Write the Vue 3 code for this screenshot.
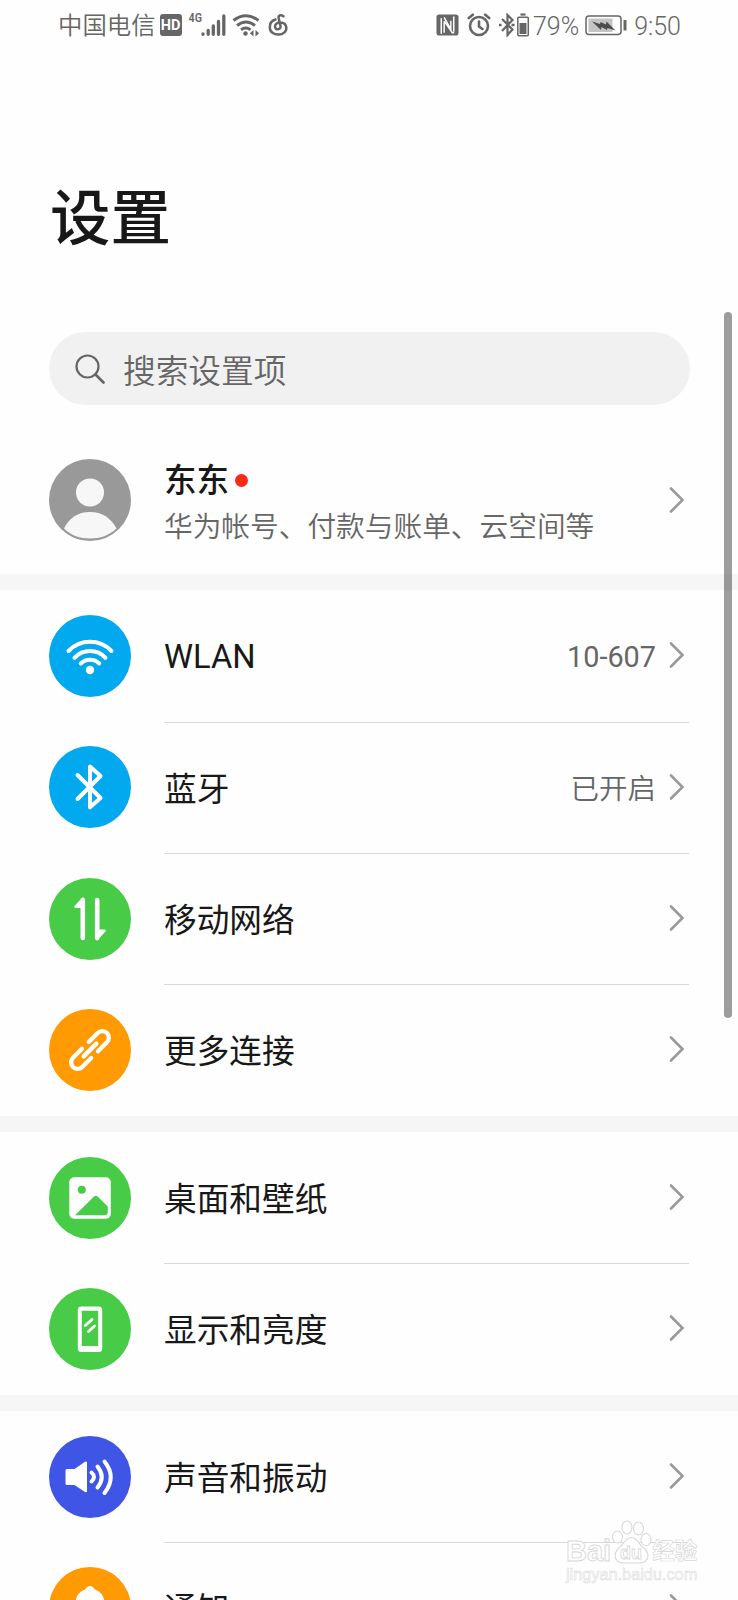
<script setup>
const groups = [
  [
    { icon: 'wifi', color: 'blue', label: 'WLAN', value: '10-607', latin: true },
    { icon: 'bluetooth', color: 'blue', label: '蓝牙', value: '已开启' },
    { icon: 'mobile', color: 'green', label: '移动网络' },
    { icon: 'link', color: 'orange', label: '更多连接' },
  ],
  [
    { icon: 'picture', color: 'green', label: '桌面和壁纸' },
    { icon: 'display', color: 'green', label: '显示和亮度' },
  ],
  [
    { icon: 'sound', color: 'indigo', label: '声音和振动' },
    { icon: 'bell', color: 'orange', label: '通知' },
  ],
]
</script>

<template>
  <div class="screen">
    <header class="status">
      <div class="status-left">
        <span class="carrier">中国电信</span>
        <span class="hd">HD</span>
        <span class="net">4G</span>
        <svg class="signal" width="25" height="24" viewBox="0 0 25 24" stroke="#666" stroke-width="3.300" stroke-linecap="round">
          <path d="M2 21.300v-.5M7.200 21.300v-4M12.300 21.300v-8.500M17.500 21.300v-13M22.800 21.300v-18.300" />
        </svg>
        <svg class="wifi" width="28" height="24" viewBox="0 0 28 24" fill="none" stroke="#666" stroke-width="2.900">
          <path d="M1.500 7.500q12.500-9.500 25 0M5 12.500q9-7 18 0M9 16.800q5-3.600 9.500 0" />
          <circle cx="13.500" cy="20.500" r="2.200" fill="#666" stroke="none" />
          <path d="M21.500 17v6.500l-3.600-3.200zM23.500 17v6.500l3.600-3.200z" fill="#666" stroke="none" />
        </svg>
        <svg class="music" width="20" height="24" viewBox="0 0 20 24" fill="none" stroke="#666" stroke-width="2.500" stroke-linecap="round">
          <path d="M15.500 3.300c-3-2.200-5.500-.8-4.800 2l1.800 8c.5 3.800-5.500 4-5.500.3 0-5.500 10.500-5.800 11.300.7.800 9.300-15.800 10-16.500.5C1.600 10.500 4 7.500 7.500 6.500" />
        </svg>
      </div>
      <div class="status-right">
        <svg width="23" height="24" viewBox="0 0 24 24">
          <rect x="0.500" y="1" width="23" height="22" rx="3" fill="#666" />
          <path d="M5.500 21V5M18.500 3V19" fill="none" stroke="#fff" stroke-width="1.600" />
          <path d="M8.500 4l7 12.500V7.500M5.500 5M8.500 8v12M8.500 8l8.500 12h2" fill="none" stroke="#fff" stroke-width="1.500" />
        </svg>
        <svg class="alarm" width="24" height="24" viewBox="0 0 24 24" fill="none" stroke="#666" stroke-width="2.600" stroke-linecap="round">
          <circle cx="12" cy="13" r="9" />
          <path d="M1.800 5l4-3.300M22.200 5l-4-3.300M12 8.500v5l3.500 2.500" />
        </svg>
        <svg class="bt" width="32" height="24" viewBox="0 0 32 24" fill="none" stroke="#666" stroke-width="2.200">
          <path d="M4 6l10.500 10.500L9.500 22V2l5 5L4 18" />
          <path d="M1 12h2.500M13.500 12h3" stroke-width="2.600" />
          <rect x="19.800" y="4.200" width="10.500" height="18.500" rx="1" stroke-width="1.500" />
          <path d="M22.500 1.500h5" />
          <path d="M21.500 10h7v11h-7z" fill="#666" stroke="none" />
        </svg>
        <span class="percent">79%</span>
        <svg class="battery" width="42" height="24" viewBox="0 0 42 24">
          <rect x="1" y="3" width="35" height="18.500" rx="3" fill="none" stroke="#666" stroke-width="1.500" />
          <rect x="3.500" y="5.500" width="24" height="13.500" fill="#c4c4c4" />
          <path d="M7 8.500l8 2.500.5-2 5.500 2.500.5-3 9 9-8-2.500-.5 2-5.500-3-.5 3z" fill="#4c4c4c" />
          <path d="M40 7v10.500" stroke="#666" stroke-width="3" />
        </svg>
        <span class="time">9:50</span>
      </div>
    </header>

    <h1>设置</h1>

    <div class="search">
      <svg width="30" height="30" viewBox="0 0 30 30" fill="none" stroke="#666" stroke-width="2.200" stroke-linecap="round">
        <circle cx="12.500" cy="12.500" r="11" />
        <path d="M20.500 20.500L28.500 28.500" stroke-width="2.700" />
      </svg>
      <span>搜索设置项</span>
    </div>

    <div class="account">
      <svg class="avatar" width="82" height="82" viewBox="0 0 82 82">
        <circle cx="41" cy="41" r="41" fill="#999" />
        <circle cx="41" cy="33.500" r="14" fill="#f7f7f7" />
        <path d="M15 69.500C20 59 29 53 41 53s21 6 26.500 16.500C60 76.500 51 79.500 41 79.500S22 76.500 15 69.500z" fill="#f7f7f7" />
      </svg>
      <div class="account-text">
        <div class="name">东东<i class="dot"></i></div>
        <div class="sub">华为帐号、付款与账单、云空间等</div>
      </div>
      <svg class="chevron" width="16" height="28" viewBox="0 0 16 28"><path d="M2 2.500L13.500 14L2 25.500" /></svg>
    </div>

    <template v-for="(group, g) in groups" :key="g">
      <div class="gap"></div>
      <section>
        <div v-for="row in group" :key="row.label" class="row" :class="{ latin: row.latin }">
          <svg class="icon" :class="row.color" width="82" height="82" viewBox="0 0 82 82" fill="none" stroke="#fff" stroke-width="4" stroke-linecap="round" stroke-linejoin="round">
            <g v-if="row.icon === 'wifi'">
              <path d="M19.500 36a29.700 29.700 0 0 1 43 0M25.500 42.800a21.200 21.200 0 0 1 31 0M31.800 48.500a13 13 0 0 1 18.400 0" />
              <circle cx="41" cy="55" r="4.200" fill="#fff" stroke="none" />
            </g>
            <path v-else-if="row.icon === 'bluetooth'" d="M28.500 29L51.500 52L41 61.300V20.500L51.500 30L28.500 53" />
            <g v-else-if="row.icon === 'mobile'">
              <path d="M33.800 22V60M48.200 22V60" stroke-width="4.600" />
              <path d="M35 19.500V30H26c-1-.5-1-1.500-.3-2.300L33.500 19.500zM47 62.500V51.500h9c1 .5 1 1.500.3 2.300L48.500 62z" fill="#fff" stroke="none" />
            </g>
            <g v-else-if="row.icon === 'link'" transform="rotate(-45 41 41)" stroke-width="4.300">
              <path d="M45.800 34.500H58.500a6.500 6.500 0 0 1 0 13H45.800M36.200 47.500H23.500a6.500 6.500 0 0 1 0-13H36.200" />
              <path d="M32 41H50" />
            </g>
            <g v-else-if="row.icon === 'picture'" stroke="none">
              <rect x="20.300" y="20.300" width="41.500" height="41.500" rx="5" fill="#fff" />
              <circle cx="32.800" cy="32.800" r="4" fill="#48cc48" />
              <path d="M26 58.300L45 39.500c1.200-1 2.500-1 3.600 0L58.800 49.500V55a3.300 3.300 0 0 1-3.300 3.300z" fill="#48cc48" />
            </g>
            <g v-else-if="row.icon === 'display'">
              <path d="M32.300 18.500h17.400a3.500 3.500 0 0 1 3.500 3.500v38.500a3.500 3.500 0 0 1-3.500 3.500H32.300a3.500 3.500 0 0 1-3.500-3.500V22a3.500 3.500 0 0 1 3.500-3.500zM32.800 22.800V58H49.200V22.800z" fill="#fff" fill-rule="evenodd" stroke="none" />
              <path d="M36.300 37.500L43 31.500M39.500 43.500L45.500 38" stroke-width="2.800" />
            </g>
            <g v-else-if="row.icon === 'sound'">
              <path d="M16.500 34.500q0-1.500 1.500-1.500H25.500L36 25.800q2-1 2 1V55q0 2-2 1L25.500 49H18q-1.500 0-1.500-1.500z" fill="#fff" stroke="none" />
              <path d="M42.500 36.500q5 4.500 0 9M48.500 30.500q8.500 10.500 0 21M55.500 25.500q12.500 15.500 0 31.500" />
            </g>
            <path v-else d="M41 19c-2 0-3.500 1.500-5 3.500-5 1.700-9.300 6-9.500 13.500V49l-4 5h37l-4-5V36c-.2-7.500-4.500-11.800-9.500-13.500C44.500 20.500 43 19 41 19z" fill="#fff" stroke="none" />
          </svg>
          <div class="row-body">
            <span class="label">{{ row.label }}</span>
            <span v-if="row.value" class="value">{{ row.value }}</span>
            <svg class="chevron" width="16" height="28" viewBox="0 0 16 28"><path d="M2 2.500L13.500 14L2 25.500" /></svg>
          </div>
        </div>
      </section>
    </template>

    <div class="scrollbar"></div>

    <div class="watermark">
      <div class="brand">
        <span class="bai">Bai</span>
        <svg width="42" height="46" viewBox="0 0 42 46" fill="#fff" stroke="#d8d8d8" stroke-width="1.100">
          <ellipse cx="7.500" cy="18" rx="5" ry="6" />
          <ellipse cx="17" cy="8.500" rx="5" ry="6.500" />
          <ellipse cx="28.500" cy="9.500" rx="5" ry="6.500" />
          <ellipse cx="36" cy="20.500" rx="5" ry="6" />
          <path d="M21.500 18.500c-5 0-6.500 4-9 7-3.500 3.500-7.500 5.500-7.500 11 0 4.500 3.500 7.500 8 7.500h17c4.500 0 8-3 8-7.500 0-5.500-4.500-7.500-8-11-2.500-3-4-7-8.500-7z" />
          <text x="21" y="40" text-anchor="middle" font-family="Liberation Sans, sans-serif" font-size="18" font-weight="700" stroke-width="0.800">du</text>
        </svg>
        <span class="jy">经验</span>
      </div>
      <div class="url">jingyan.baidu.com</div>
    </div>
  </div>
</template>

<style>
body {
  background: #fdfdfd;
}
</style>

<style scoped>
.screen {
  position: relative;
  width: 738px;
  height: 1600px;
  overflow: hidden;
  background: #fefefe;
  color: #181818;
  font-family: Roboto, 'Noto Sans CJK SC', sans-serif;
}
.status {
  display: flex;
  justify-content: space-between;
  height: 50px;
  padding: 0 57px 0 58px;
  color: #666;
}
.status-left,
.status-right {
  display: flex;
  align-items: center;
}
.carrier {
  padding-top: 2px;
  font-size: 24.400px;
  font-weight: 350;
  line-height: 48px;
}
.hd {
  width: 22px;
  height: 22px;
  margin-left: 4px;
  border-radius: 3px;
  background: #666;
  color: #fff;
  font-size: 14.500px;
  font-weight: 700;
  line-height: 23px;
  text-align: center;
}
.net {
  align-self: flex-start;
  margin: 10px 0 0 7px;
  font-family: 'Roboto Condensed', Roboto, sans-serif;
  font-size: 12.500px;
  font-weight: 500;
  line-height: 15px;
}
.signal {
  margin-left: -1px;
}
.wifi {
  margin-left: 6px;
}
.music {
  margin-left: 8px;
}
.alarm {
  margin-left: 8px;
}
.bt {
  margin-left: 7px;
}
.percent {
  margin-left: 3px;
  padding-top: 2px;
  font-size: 25px;
  font-weight: 300;
}
.battery {
  margin-left: 6px;
}
.time {
  margin-left: 7px;
  padding-top: 2px;
  font-size: 25px;
  font-weight: 300;
}
h1 {
  margin: 125px 0 0 50px;
  font-size: 60.500px;
  font-weight: 500;
  line-height: 90px;
  height: 90px;
}
.search {
  display: flex;
  align-items: center;
  gap: 18px;
  width: 641px;
  height: 73px;
  margin: 67px 0 0 49px;
  padding-left: 26px;
  box-sizing: border-box;
  border-radius: 37px;
  background: #f1f1f1;
  color: #666;
  font-size: 32.700px;
  font-weight: 350;
}
.account {
  display: flex;
  align-items: center;
  height: 169px;
  padding: 11px 53px 0 49px;
  box-sizing: border-box;
}
.avatar {
  margin-top: 10px;
}
.account-text {
  flex: 1;
  margin-left: 33px;
  padding-top: 17px;
}
.name {
  display: flex;
  align-items: center;
  font-size: 32.500px;
  font-weight: 500;
  line-height: 46px;
}
.dot {
  width: 13px;
  height: 13px;
  margin-left: 6px;
  border-radius: 50%;
  background: #fa2a18;
}
.sub {
  color: #666;
  font-size: 28.700px;
  font-weight: 350;
  line-height: 46px;
}
.chevron {
  flex: none;
  fill: none;
  stroke: #999;
  stroke-width: 2.600px;
  stroke-linecap: round;
}
.account .chevron {
  margin-top: 10px;
}
.gap {
  height: 16.300px;
  background: #f6f6f6;
}
.row {
  display: flex;
  align-items: center;
  height: 131.340px;
  padding: 0 49px;
}
.icon {
  flex: none;
  border-radius: 50%;
}
.blue {
  background: #02a9ef;
}
.green {
  background: #48cc48;
}
.orange {
  background: #ff9a02;
}
.indigo {
  background: #3f55e6;
}
.row-body {
  display: flex;
  flex: 1;
  align-items: center;
  height: calc(100% + 1px);
  box-sizing: border-box;
  margin: 0 0 -1px 33px;
  padding: 0 4px 1px 0;
  border-bottom: 1px solid #d8d8d8;
}
.row:last-child .row-body {
  border-bottom-color: transparent;
}
.label {
  flex: 1;
  padding-bottom: 1px;
  font-size: 32.700px;
}
.value {
  margin-right: 13px;
  padding-bottom: 1px;
  color: #666;
  font-size: 28.500px;
  font-weight: 350;
}
.latin .label,
.latin .value {
  padding: 4px 0 0;
}
.latin .value {
  font-size: 28.800px;
  font-weight: 400;
}
.scrollbar {
  position: absolute;
  top: 312px;
  left: 724px;
  width: 8px;
  height: 706px;
  border-radius: 4px;
  background: rgba(0, 0, 0, 0.38);
}
.watermark {
  position: absolute;
  top: 1519px;
  left: 566px;
  width: 135px;
  color: #fff;
  font-family: 'Liberation Sans', 'Noto Sans CJK SC', sans-serif;
}
.brand {
  display: flex;
  align-items: flex-end;
  height: 46px;
  font-weight: 700;
}
.bai {
  font-size: 29px;
  line-height: 28px;
  -webkit-text-stroke: 0.900px #d8d8d8;
}
.brand svg {
  flex: none;
  margin-left: -1px;
}
.jy {
  font-size: 22.500px;
  line-height: 26px;
  -webkit-text-stroke: 0.700px #d8d8d8;
}
.url {
  font-size: 16.300px;
  line-height: 18px;
  -webkit-text-stroke: 0.500px #d8d8d8;
}
</style>
